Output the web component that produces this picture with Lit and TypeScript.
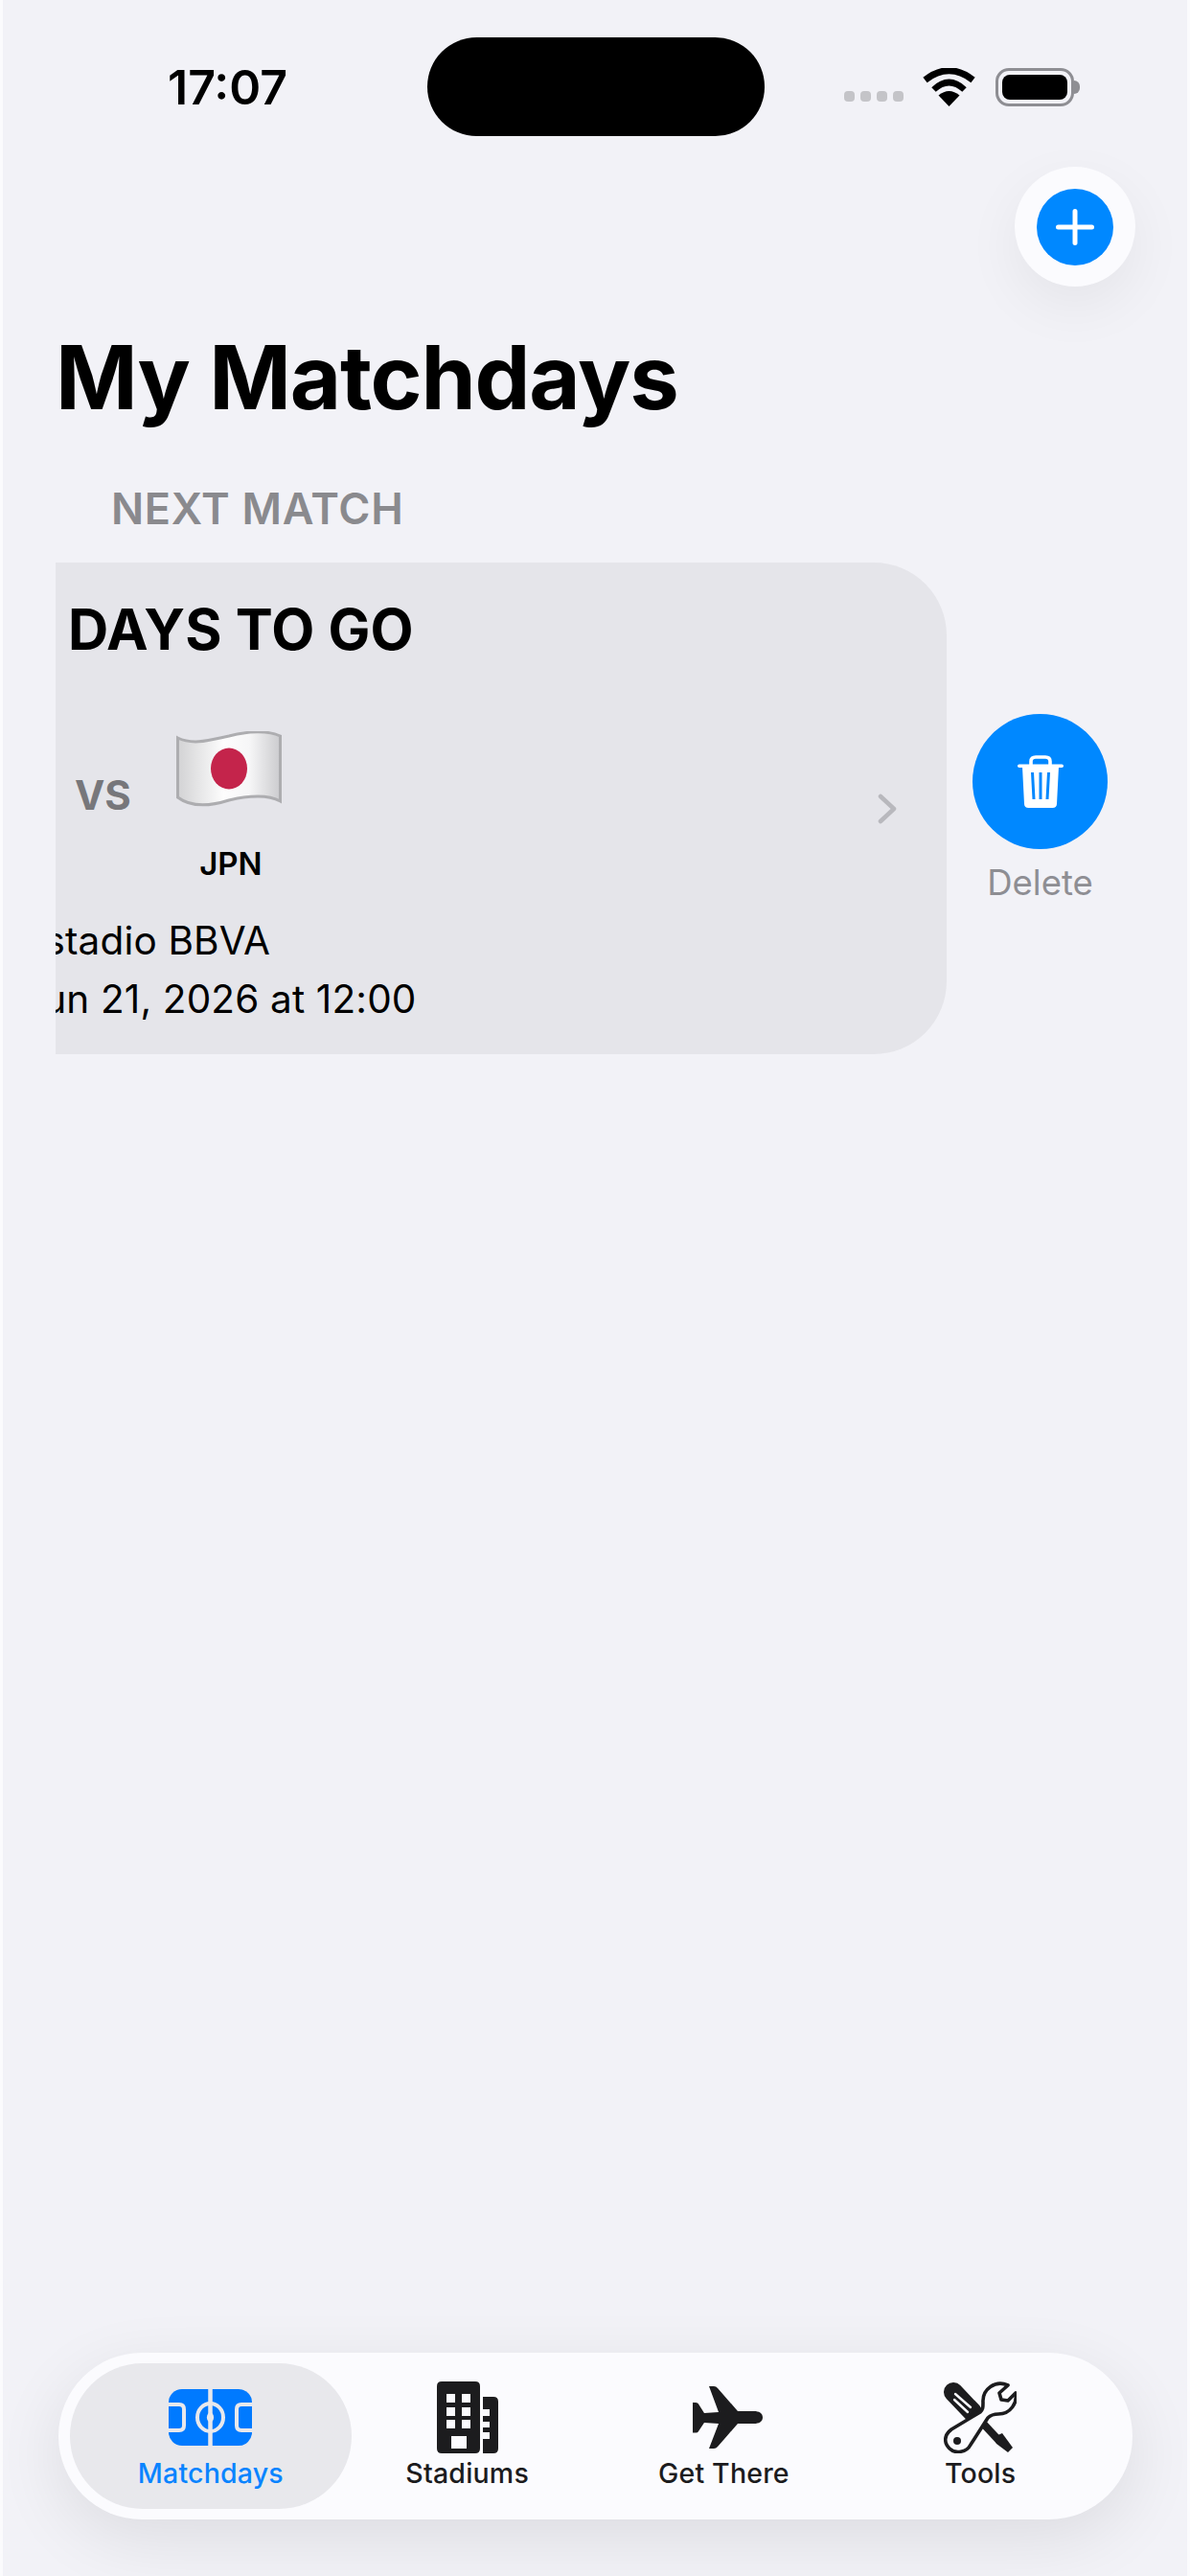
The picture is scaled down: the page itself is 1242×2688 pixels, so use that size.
import { LitElement, css, html, svg } from 'lit';
import { customElement } from 'lit/decorators.js';

const fieldIcon = svg`<svg width="87" height="59" viewBox="0 0 87 59">
  <rect width="87" height="59" rx="14" fill="#007aff"/>
  <g fill="none" stroke="#e8e8ec" stroke-width="4">
    <path d="M0 16H11Q16 16 16 21V38Q16 43 11 43H0"/>
    <path d="M87 16H76Q71 16 71 21V38Q71 43 76 43H87"/>
    <ellipse cx="43.5" cy="29.5" rx="13.5" ry="14.5"/>
    <path d="M43.5 0V59" stroke-width="4.5"/>
  </g>
  <ellipse cx="43.5" cy="29.5" rx="3.6" ry="5" fill="#e8e8ec"/>
</svg>`;

const buildingIcon = svg`<svg width="64" height="75" viewBox="0 0 64 75">
  <path fill="#1c1c1e" fill-rule="evenodd" d="M5 0H40Q45 0 45 5V70Q45 75 40 75H5Q0 75 0 70V5Q0 0 5 0ZM10 13V22H19V13ZM26 13V22H35V13ZM10 27V36H19V27ZM26 27V36H35V27ZM10 40V49H19V40ZM26 40V49H35V40ZM15 57V70H31V57Z"/>
  <path fill="#1c1c1e" d="M48 16H59Q64 16 64 21V70Q64 75 59 75H48V60H55V53H48V48H55V42H48V36H55V29H48Z"/>
</svg>`;

const planeIcon = svg`<svg class="plane" width="73" height="65" viewBox="0 0 73 65">
  <path fill="#1c1c1e" d="M73 32.5C73 37 69 39 64 39H47L26 63Q24.5 65 22 65H17L27 39L12 38L6 47Q5.5 48.5 3 48.5H0V17H3Q5.5 17 6 18.5L12 28L27 27L17 0H22Q24.5 0 26 2L47 26H64C69 26 73 28 73 32.5Z"/>
</svg>`;

const toolsIcon = svg`<svg width="76" height="75" viewBox="0 0 76 75">
  <path d="M10 11L30 32" stroke="#1c1c1e" stroke-width="20" stroke-linecap="round"/>
  <path d="M30 32L58 62" stroke="#1c1c1e" stroke-width="8"/>
  <path fill="#1c1c1e" d="M52 58L61 54L72 69L67 74L55 65Z"/>
  <path d="M12 13L28 27M11 19L25 32" stroke="#fbfbfe" stroke-width="2.4" stroke-linecap="round"/>
  <path fill="#fbfbfe" stroke="#1c1c1e" stroke-width="3.6" stroke-linejoin="round" d="M67 4L58 12L60 19L67 20L75 12C77 22 70 34 57 34C52 34 48 36 46 38L28 66C24 74 12 76 6 70C0 64 0 56 8 50L38 32C41 29 41 27 41 22C40 8 54 -2 67 4Z"/>
  <circle cx="14" cy="62" r="4" fill="#1c1c1e"/>
</svg>`;

const tabs = [
  { label: 'Matchdays', icon: fieldIcon, active: true },
  { label: 'Stadiums', icon: buildingIcon, active: false },
  { label: 'Get There', icon: planeIcon, active: false },
  { label: 'Tools', icon: toolsIcon, active: false },
];

@customElement('app-root')
export class AppRoot extends LitElement {
  static override styles = css`
    :host {
      display: block;
      height: 2688px;
      padding: 0 3px;
      box-sizing: border-box;
      background: #fbfbfd;
      font-family: 'Inter', 'Liberation Sans', sans-serif;
      color: #000;
    }

    .screen {
      height: 100%;
      display: flex;
      flex-direction: column;
      background: #f2f2f7;
      overflow: hidden;
    }

    .status {
      display: grid;
      grid-template-columns: 443px 352px 1fr;
      align-items: center;
      height: 103px;
      margin-top: 39px;
    }

    .time {
      padding-left: 172px;
      font-size: 50px;
      font-weight: 600;
      line-height: 60px;
    }

    .island {
      height: 103px;
      border-radius: 52px;
      background: #000;
    }

    .status-icons {
      display: flex;
      align-items: center;
      padding-left: 83px;
    }

    .dots {
      display: flex;
      gap: 6px;
      margin-top: 19px;
    }

    .dots span {
      width: 11px;
      height: 11px;
      border-radius: 4px;
      background: #c4c4c8;
    }

    .wifi {
      margin-left: 20px;
    }

    .battery {
      display: flex;
      align-items: center;
      margin-left: 21px;
    }

    .battery-body {
      width: 82px;
      height: 40px;
      box-sizing: border-box;
      padding: 4px;
      border: 3px solid #8e8e93;
      border-radius: 14px;
    }

    .battery-body div {
      height: 100%;
      border-radius: 8px;
      background: #000;
    }

    .battery-nub {
      width: 6px;
      height: 14px;
      border-radius: 0 7px 7px 0;
      background: #8e8e93;
    }

    .add-row {
      display: flex;
      justify-content: flex-end;
      margin-top: 32px;
      padding-right: 54px;
    }

    .add {
      display: flex;
      align-items: center;
      justify-content: center;
      width: 126px;
      height: 125px;
      border-radius: 50%;
      background: #fbfbfe;
      box-shadow: 0 20px 60px rgba(0, 0, 0, 0.06);
    }

    .add-circle {
      display: flex;
      align-items: center;
      justify-content: center;
      width: 80px;
      height: 80px;
      border-radius: 50%;
      background: #0088ff;
    }

    h1 {
      margin: 45px 0 0;
      padding-left: 55px;
      font-size: 92px;
      font-weight: 700;
      line-height: 100px;
      letter-spacing: -1.2px;
    }

    .section {
      margin-top: 62px;
      padding-left: 113px;
      font-size: 45px;
      font-weight: 600;
      line-height: 50px;
      letter-spacing: 0.7px;
      color: #8a8a8e;
    }

    .row {
      display: flex;
      margin: 31px 0 0 55px;
    }

    .card {
      display: flex;
      align-items: center;
      width: 930px;
      height: 513px;
      padding-right: 52px;
      box-sizing: border-box;
      border-radius: 0 76px 76px 0;
      background: #e5e5ea;
      overflow: hidden;
    }

    .card-body {
      flex: 1;
      align-self: flex-start;
      padding-top: 35px;
    }

    .days {
      padding-left: 13px;
      font-size: 58.5px;
      font-weight: 700;
      line-height: 70px;
      letter-spacing: 0.2px;
    }

    .match {
      display: flex;
      margin: 71px 0 0 20px;
      gap: 47px;
    }

    .vs {
      margin-top: 42px;
      font-size: 42px;
      font-weight: 700;
      line-height: 50px;
      color: #77777b;
    }

    .team {
      display: flex;
      flex-direction: column;
      align-items: center;
      width: 110px;
    }

    .team-code {
      margin-top: 38px;
      padding-left: 4px;
      font-size: 33px;
      font-weight: 600;
      line-height: 40px;
    }

    .venue {
      margin: 30px 0 0 -36px;
      font-size: 40.5px;
      line-height: 61px;
      letter-spacing: 0.15px;
      white-space: nowrap;
    }

    .delete {
      display: flex;
      flex-direction: column;
      align-items: center;
      justify-content: center;
      width: 141px;
      margin-left: 27px;
      padding-top: 1px;
    }

    .delete-circle {
      display: flex;
      align-items: center;
      justify-content: center;
      width: 141px;
      height: 141px;
      border-radius: 50%;
      background: #0088ff;
    }

    .delete-label {
      margin-top: 12px;
      font-size: 36.5px;
      line-height: 46px;
      color: #8e8e93;
    }

    .tabbar {
      display: grid;
      grid-template-columns: repeat(4, 1fr);
      height: 174px;
      margin: auto 57px 59px 58px;
      padding: 0 25px;
      border-radius: 87px;
      background: #fbfbfe;
      box-shadow: 0 20px 70px rgba(0, 0, 0, 0.09);
    }

    .tab {
      position: relative;
      display: flex;
      flex-direction: column;
      align-items: center;
      padding-top: 29px;
      color: #1c1c1e;
    }

    .tab.active {
      color: #0a84ff;
    }

    .tab.active::before {
      content: '';
      position: absolute;
      inset: 11px -13px;
      border-radius: 76px;
      background: #e8e8ec;
    }

    .tab-icon {
      position: relative;
      display: flex;
      align-items: center;
      justify-content: center;
      height: 76px;
    }

    .plane {
      margin-left: 8px;
    }

    .tab-label {
      position: relative;
      margin-top: 3px;
      font-size: 28.5px;
      font-weight: 500;
      line-height: 36px;
      letter-spacing: 0.2px;
    }
  `;

  override render() {
    return html`
      <div class="screen">
        <div class="status">
          <div class="time">17:07</div>
          <div class="island"></div>
          <div class="status-icons">
            <div class="dots"><span></span><span></span><span></span><span></span></div>
            <svg class="wifi" width="55" height="40" viewBox="0 0 55 40">
              <path d="M27.5 40L16.5 28.5Q27.5 19.5 38.5 28.5Z"/>
              <path d="M11.5 22.5Q27.5 7.5 43.5 22.5" fill="none" stroke="#000" stroke-width="6.5"/>
              <path d="M2.5 12.5Q27.5 -7 52.5 12.5" fill="none" stroke="#000" stroke-width="7"/>
            </svg>
            <div class="battery">
              <div class="battery-body"><div></div></div>
              <div class="battery-nub"></div>
            </div>
          </div>
        </div>

        <div class="add-row">
          <div class="add">
            <div class="add-circle">
              <svg width="40" height="38" viewBox="0 0 40 38">
                <path d="M20 2.5V35.5M2.5 19H37.5" stroke="#fff" stroke-width="5" stroke-linecap="round"/>
              </svg>
            </div>
          </div>
        </div>

        <h1>My Matchdays</h1>
        <div class="section">NEXT MATCH</div>

        <div class="row">
          <div class="card">
            <div class="card-body">
              <div class="days">DAYS TO GO</div>
              <div class="match">
                <div class="vs">VS</div>
                <div class="team">
                  <svg width="110" height="80" viewBox="0 0 110 80">
                    <defs>
                      <linearGradient id="cloth" x1="0" x2="1" y1="0" y2="0">
                        <stop offset="0" stop-color="#d2d2d4"/>
                        <stop offset="0.45" stop-color="#fdfdfd"/>
                        <stop offset="0.7" stop-color="#f6f6f7"/>
                        <stop offset="1" stop-color="#cbcbce"/>
                      </linearGradient>
                    </defs>
                    <path d="M1.500 7C18 15 36 9 55 5C74 0 96 -1 108.500 5V73C96 66 76 67 55 72C36 78 16 80 1.500 69Z" fill="url(#cloth)" stroke="#adadb0" stroke-width="3"/>
                    <ellipse cx="55" cy="39" rx="19" ry="21.500" fill="#c4244b"/>
                  </svg>
                  <div class="team-code">JPN</div>
                </div>
              </div>
              <div class="venue">
                <div>Estadio BBVA</div>
                <div>Jun 21, 2026 at 12:00</div>
              </div>
            </div>
            <svg width="20" height="32" viewBox="0 0 20 32">
              <path d="M3 3L17 16L3 29" fill="none" stroke="#b8b8bd" stroke-width="4.500" stroke-linecap="round" stroke-linejoin="round"/>
            </svg>
          </div>

          <div class="delete">
            <div class="delete-circle">
              <svg width="48" height="55" viewBox="0 0 48 55">
                <path d="M14 11V6.500Q14 2 19 2H29Q34 2 34 6.500V11" fill="none" stroke="#fff" stroke-width="3.600"/>
                <rect y="9.500" width="48" height="3.600" rx="1.800" fill="#fff"/>
                <path fill="#fff" d="M5 12H43L41 51Q40.800 55 36.500 55H11.500Q7.200 55 7 51Z"/>
                <path d="M15.500 18L17 46M24 18V46M32.500 18L31 46" stroke="#0088ff" stroke-width="3"/>
              </svg>
            </div>
            <div class="delete-label">Delete</div>
          </div>
        </div>

        <div class="tabbar">
          ${tabs.map(
            (t) => html`
              <div class="tab ${t.active ? 'active' : ''}">
                <div class="tab-icon">${t.icon}</div>
                <div class="tab-label">${t.label}</div>
              </div>
            `
          )}
        </div>
      </div>
    `;
  }
}
